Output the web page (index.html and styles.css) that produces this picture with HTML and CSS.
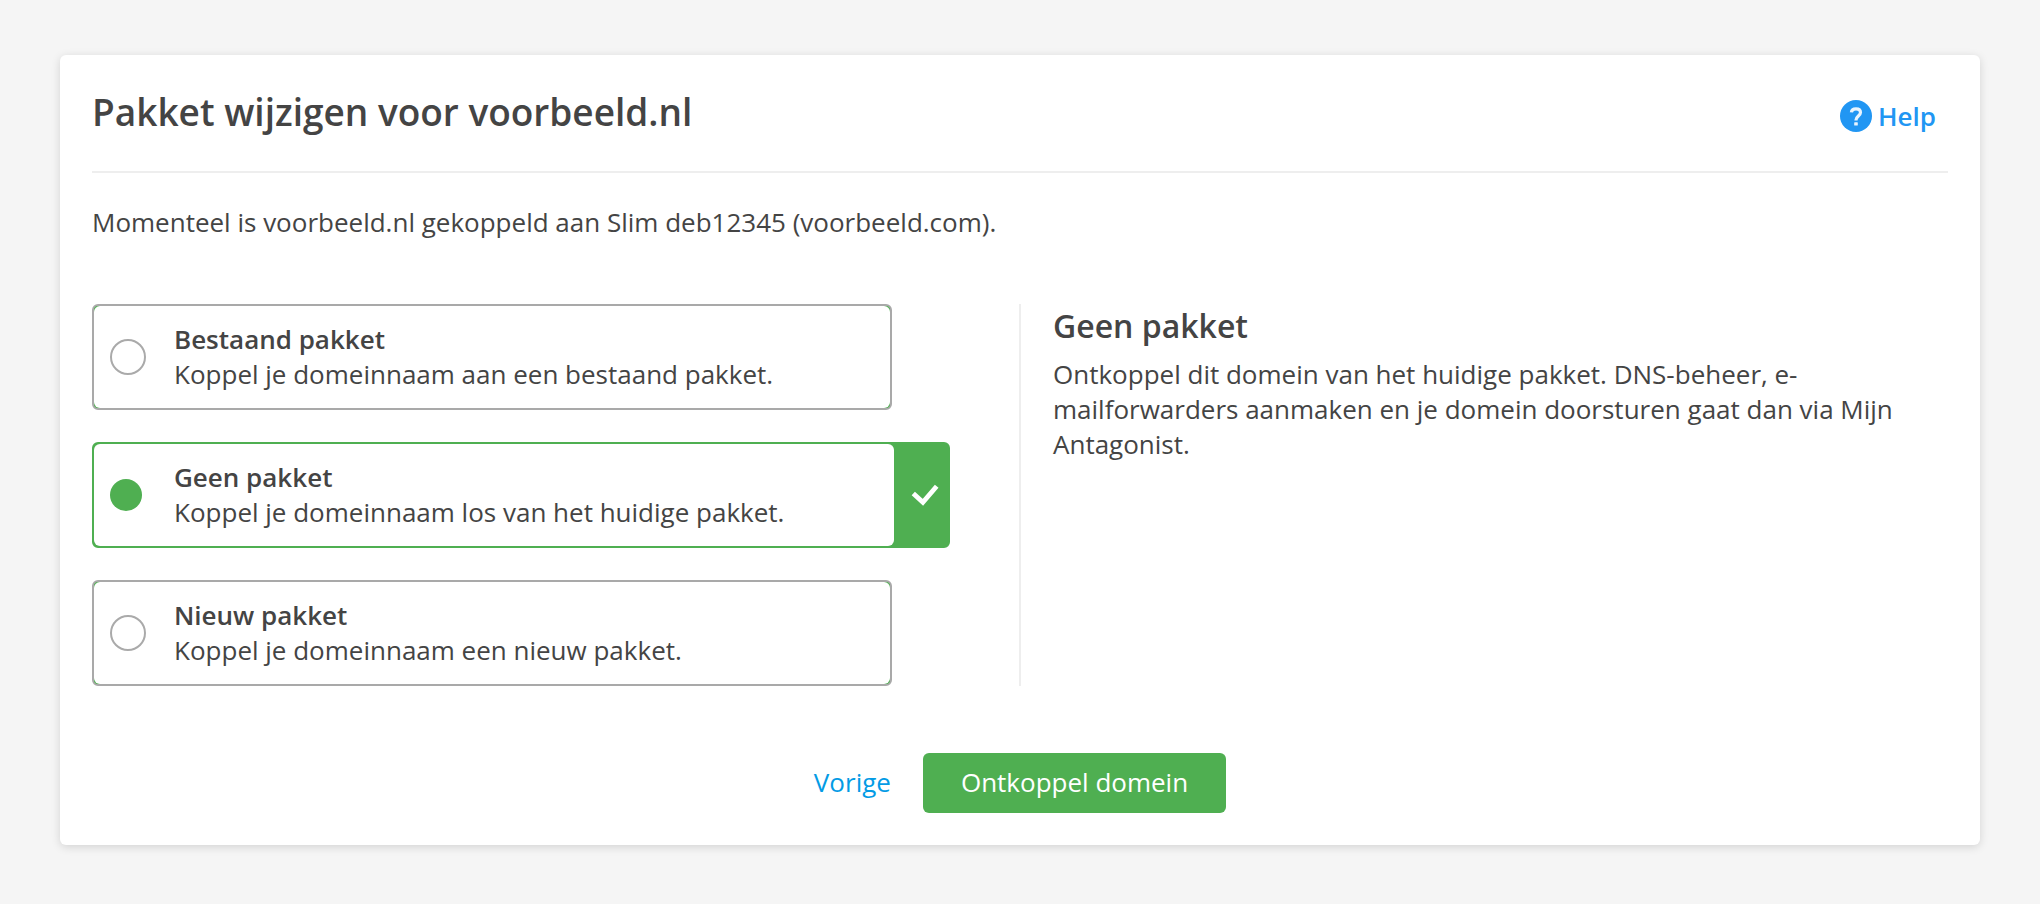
FILE: index.html
```html
<!DOCTYPE html>
<html lang="nl">
<head>
<meta charset="utf-8">
<meta name="viewport" content="width=device-width, initial-scale=1">
<title>Pakket wijzigen voor voorbeeld.nl</title>
<link rel="stylesheet" href="styles.css">
</head>
<body>
<main class="card">
  <header class="card-header">
    <h1 class="title">Pakket wijzigen voor voorbeeld.nl</h1>
    <a class="help" href="#help">
      <svg class="help-icon" viewBox="0 0 32 32" aria-hidden="true">
        <circle cx="16" cy="16" r="16" fill="#2196f3"/>
        <path d="M11.400 12.400C11.600 10 13.400 8.900 16 8.900c2.800 0 4.500 1.400 4.500 3.700 0 3.300-4.500 3.600-4.500 7.400v0.600" fill="none" stroke="#e9f4fe" stroke-width="3.200"/>
        <rect x="14.200" y="22.200" width="3.600" height="3.400" rx="0.600" fill="#e9f4fe"/>
      </svg>
      <span>Help</span>
    </a>
  </header>
  <p class="intro">Momenteel is voorbeeld.nl gekoppeld aan Slim deb12345 (voorbeeld.com).</p>
  <form class="form">
    <div class="columns">
      <div class="options" role="radiogroup" aria-label="Pakket">
        <label class="option">
          <span class="option-body">
            <input class="radio" type="radio" name="pakket" value="bestaand">
            <span class="option-text"><strong class="option-title">Bestaand pakket</strong><span>Koppel je domeinnaam aan een bestaand pakket.</span></span>
          </span>
        </label>
        <label class="option option-selected">
          <span class="option-body">
            <input class="radio" type="radio" name="pakket" value="geen" checked>
            <span class="option-text"><strong class="option-title">Geen pakket</strong><span>Koppel je domeinnaam los van het huidige pakket.</span></span>
          </span>
          <span class="option-mark">
            <svg class="check" viewBox="0 0 28 22" aria-hidden="true"><path d="M2.300 9.400L11.900 18.200L25.700 2.200" fill="none" stroke="#fff" stroke-width="4.800"/></svg>
          </span>
        </label>
        <label class="option">
          <span class="option-body">
            <input class="radio" type="radio" name="pakket" value="nieuw">
            <span class="option-text"><strong class="option-title">Nieuw pakket</strong><span>Koppel je domeinnaam een nieuw pakket.</span></span>
          </span>
        </label>
      </div>
      <section class="details">
        <h2 class="details-title">Geen pakket</h2>
        <p class="details-text">Ontkoppel dit domein van het huidige pakket. DNS-beheer, e-mailforwarders aanmaken en je domein doorsturen gaat dan via Mijn Antagonist.</p>
      </section>
    </div>
    <div class="actions">
      <a class="back" href="#vorige">Vorige</a>
      <button class="submit" type="button">Ontkoppel domein</button>
    </div>
  </form>
</main>
</body>
</html>
```

FILE: styles.css
```css
* {
  box-sizing: border-box;
}

body {
  margin: 0;
  padding: 55px 60px;
  background: #f5f5f5;
  color: #444;
  font-family: "Open Sans", "Noto Sans", sans-serif;
  font-size: 26px;
  line-height: 35px;
}

h1,
h2,
p {
  margin: 0;
}

a {
  text-decoration: none;
}

.card {
  padding: 32px;
  background: #fff;
  border-radius: 6px;
  box-shadow: 0 2px 10px rgba(0, 0, 0, 0.14);
}

.card-header {
  display: flex;
  align-items: center;
  justify-content: space-between;
  padding: 0 12px 34px 0;
  border-bottom: 2px solid #eee;
}

.title {
  font-size: 37px;
  line-height: 50px;
  font-weight: 600;
}

.help {
  display: flex;
  align-items: center;
  gap: 6px;
  padding-top: 8px;
  color: #2196f3;
  font-weight: 600;
}

.help-icon {
  width: 32px;
  height: 32px;
}

.intro {
  padding: 32px 0 64px;
}

.columns {
  display: grid;
  grid-template-columns: 1fr 1fr;
}

.options {
  display: flex;
  flex-direction: column;
  gap: 32px;
  padding-right: 70px;
}

.option {
  display: flex;
  margin-right: 58px;
  border: 2px solid #a9a9a9;
  border-radius: 6px;
  background: #4faf51;
  cursor: pointer;
}

.option-selected {
  margin-right: 0;
  border-color: #4faf51;
}

.option-body {
  display: flex;
  flex: 1;
  align-items: center;
  padding: 16px;
  background: #fff;
  border-radius: 6px;
}

.option-text {
  display: flex;
  flex-direction: column;
}

.option-title {
  font-weight: 600;
}

.radio {
  appearance: none;
  flex: none;
  width: 36px;
  height: 36px;
  margin: 0 28px 0 0;
  border: 2px solid #aaa;
  border-radius: 50%;
}

.radio:checked {
  width: 32px;
  height: 32px;
  margin-right: 32px;
  border: 0;
  background: #4faf51;
}

.option-mark {
  display: flex;
  align-items: center;
  justify-content: center;
  width: 54px;
  padding-left: 8px;
}

.check {
  width: 28px;
  height: 22px;
}

.details {
  margin-left: -1px;
  padding: 0 32px;
  border-left: 2px solid #eee;
}

.details-title {
  padding: 0 0 9px;
  font-size: 32px;
  line-height: 44px;
  font-weight: 600;
}

.actions {
  display: flex;
  align-items: baseline;
  justify-content: center;
  gap: 32px;
  padding-top: 67px;
}

.back {
  color: #039be5;
}

.submit {
  padding: 12px 38px 13px;
  border: 0;
  border-radius: 6px;
  background: #4faf51;
  color: #fff;
  font: inherit;
  cursor: pointer;
}
```
